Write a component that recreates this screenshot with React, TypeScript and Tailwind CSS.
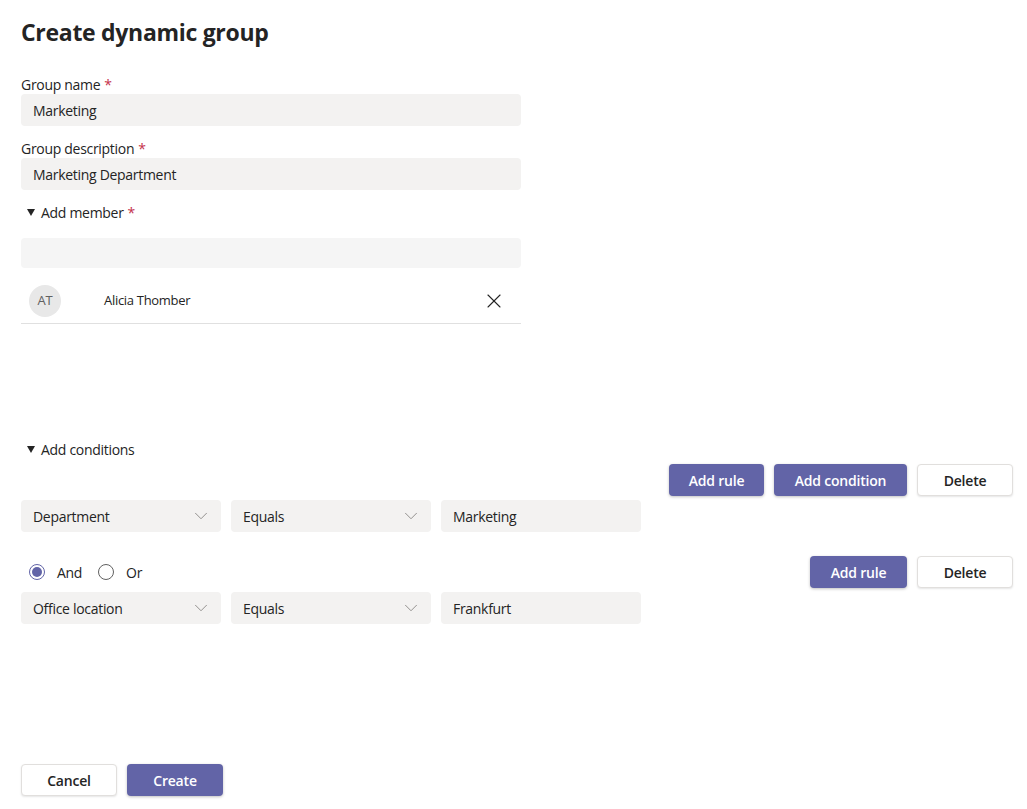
import { ChevronDown, X } from "lucide-react";

const font = { fontFamily: '"Open Sans", "Noto Sans", sans-serif' };

function Label({ text }: { text: string }) {
  return (
    <div className="h-5 flex items-center text-[14px] tracking-[-0.3px] text-[#242424]">
      {text}
      <span className="ml-1 text-[#c4314b]">*</span>
    </div>
  );
}

function TextBox({ value, className = "" }: { value: string; className?: string }) {
  return (
    <div
      className={
        "h-8 flex items-center px-3 rounded bg-[#f3f2f1] text-[14px] tracking-[-0.3px] text-[#242424] " +
        className
      }
    >
      {value}
    </div>
  );
}

function Select({ value }: { value: string }) {
  return (
    <div className="w-[200px] h-8 flex items-center justify-between pl-3 pr-[9px] rounded bg-[#f3f2f1] text-[14px] tracking-[-0.3px] text-[#242424]">
      <span>{value}</span>
      <ChevronDown size={22} strokeWidth={1} className="text-[#8a8886]" />
    </div>
  );
}

function PrimaryButton({ children, width }: { children: string; width: string }) {
  return (
    <button
      className={
        width +
        " h-8 rounded bg-[#6264a7] text-white text-[14px] tracking-[-0.2px] font-semibold shadow-[0_1px_3px_rgba(0,0,0,0.25)]"
      }
    >
      {children}
    </button>
  );
}

function SecondaryButton({ children, width }: { children: string; width: string }) {
  return (
    <button
      className={
        width +
        " h-8 rounded bg-white border border-[#e1dfdd] text-[#242424] text-[14px] tracking-[-0.2px] font-semibold shadow-[0_1px_2px_rgba(0,0,0,0.1)]"
      }
    >
      {children}
    </button>
  );
}

function Section({ title, star }: { title: string; star?: boolean }) {
  return (
    <div className="h-5 flex items-center pl-[6px] text-[14px] tracking-[-0.3px] text-[#242424]">
      <svg width="8" height="7" viewBox="0 0 8 7" className="mr-[6px]">
        <path d="M0 0 H8 L4 7 Z" fill="#242424" />
      </svg>
      {title}
      {star && <span className="ml-1 text-[#c4314b]">*</span>}
    </div>
  );
}

function Radio({ checked, label }: { checked: boolean; label: string }) {
  return (
    <label className="flex items-center gap-[12px] text-[14px] tracking-[-0.3px] text-[#242424]">
      <span
        className={
          "w-4 h-4 rounded-full border flex items-center justify-center " +
          (checked ? "border-[#6264a7]" : "border-[#616161]")
        }
      >
        {checked && <span className="w-[10px] h-[10px] rounded-full bg-[#6264a7]" />}
      </span>
      {label}
    </label>
  );
}

export default function App() {
  return (
    <div style={font} className="w-[1027px] h-[809px] bg-white pl-[21px] pr-[14px] pt-4 flex flex-col">
      <h1 className="h-8 flex items-center text-[23px] tracking-[-0.3px] font-bold text-[#242424]">
        Create dynamic group
      </h1>

      <div className="w-[500px] mt-[26px]">
        <Label text="Group name" />
        <TextBox value="Marketing" />
        <div className="mt-3">
          <Label text="Group description" />
          <TextBox value="Marketing Department" />
        </div>
        <div className="mt-3">
          <Section title="Add member" star />
        </div>
        <div className="mt-4 h-[30px] rounded-sm bg-[#f5f5f5]" />
        <div className="mt-[11px] h-[45px] flex items-center pl-2 pr-[15px] border-b border-[#e0e0e0]">
          <div className="w-8 h-8 rounded-full bg-[#e8e8e8] flex items-center justify-center text-[13px] tracking-[-0.3px] text-[#616161]">
            AT
          </div>
          <span className="ml-[43px] text-[13px] tracking-[-0.3px] text-[#242424] flex-1">
            Alicia Thomber
          </span>
          <X size={24} strokeWidth={1.1} className="text-[#242424]" />
        </div>
      </div>

      <div className="mt-[115px]">
        <Section title="Add conditions" />
      </div>

      <div className="mt-[5px] flex justify-end gap-[10px]">
        <PrimaryButton width="w-[95px]">Add rule</PrimaryButton>
        <PrimaryButton width="w-[133px]">Add condition</PrimaryButton>
        <SecondaryButton width="w-[96px]">Delete</SecondaryButton>
      </div>

      <div className="mt-1 flex gap-[10px]">
        <Select value="Department" />
        <Select value="Equals" />
        <TextBox value="Marketing" className="w-[200px]" />
      </div>

      <div className="mt-6 h-8 flex items-center">
        <div className="flex items-center gap-4 pl-2">
          <Radio checked label="And" />
          <Radio checked={false} label="Or" />
        </div>
        <div className="ml-auto flex gap-[10px]">
          <PrimaryButton width="w-[97px]">Add rule</PrimaryButton>
          <SecondaryButton width="w-[96px]">Delete</SecondaryButton>
        </div>
      </div>

      <div className="mt-1 flex gap-[10px]">
        <Select value="Office location" />
        <Select value="Equals" />
        <TextBox value="Frankfurt" className="w-[200px]" />
      </div>

      <div className="mt-[140px] flex gap-[10px]">
        <SecondaryButton width="w-[96px]">Cancel</SecondaryButton>
        <PrimaryButton width="w-[96px]">Create</PrimaryButton>
      </div>
    </div>
  );
}
